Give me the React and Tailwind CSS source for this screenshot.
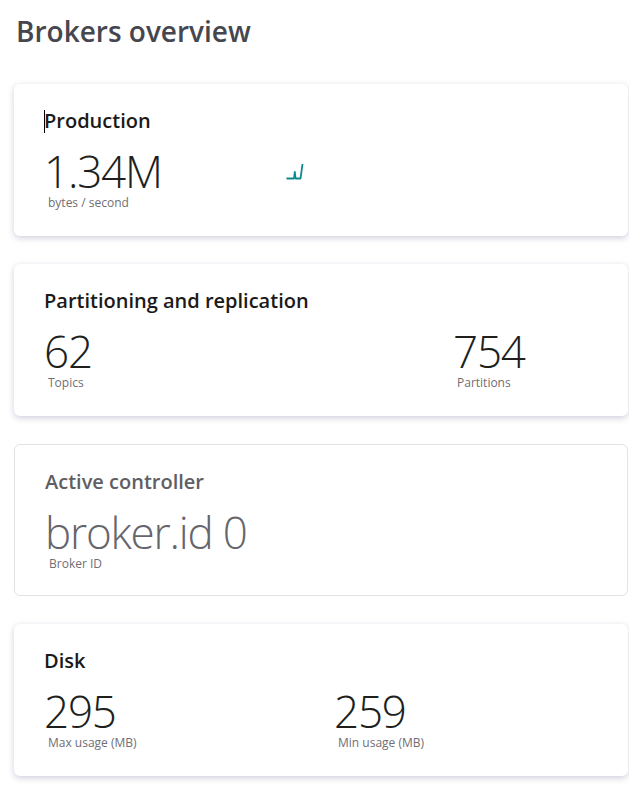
const FONT = "font-['Segoe_UI','Open_Sans','Liberation_Sans',sans-serif]";

function Stat({ value, label, muted }) {
  return (
    <div className="flex flex-col">
      <span
        className={`text-[44px] leading-[47px] font-light tracking-[-1.2px] ${
          muted ? 'text-[#66656b]' : 'text-[#201f1e]'
        }`}
      >
        {value}
      </span>
      <span className="pl-1 text-[12px] leading-4 text-[#6f6e73]">{label}</span>
    </div>
  );
}

function Sparkline() {
  return (
    <svg width="20" height="18" viewBox="0 0 20 18" className="mt-[15px]">
      <polyline
        points="0.5,15.5 8,15.5 8.8,9 9.6,15.5 14.5,15.5 16.5,1"
        fill="none"
        stroke="#0a8a8c"
        strokeWidth="1.8"
        strokeLinejoin="round"
      />
    </svg>
  );
}

function Card({ title, muted, children, caret }) {
  return (
    <div
      className={`h-[152px] rounded-md bg-white pl-[30px] pt-[23px] ${
        muted
          ? 'border border-[#e3e3e6]'
          : 'shadow-[0_2px_6px_rgba(60,64,120,0.26)]'
      }`}
    >
      <h2
        className={`flex items-center text-[20px] leading-7 font-semibold ${
          muted ? 'text-[#5f5e64]' : 'text-[#1b1a19]'
        }`}
      >
        {caret && <span className="-mr-px inline-block h-[23px] w-px bg-black" />}
        {title}
      </h2>
      <div className="mt-[13px] flex items-start">{children}</div>
    </div>
  );
}

export default function App() {
  return (
    <div className={`min-h-screen bg-white ${FONT}`}>
      <h1 className="pl-4 pt-[11px] text-[28px] leading-10 font-semibold text-[#46464f]">
        Brokers overview
      </h1>
      <div className="mt-[33px] ml-[14px] mr-px flex flex-col gap-7">
        <Card title="Production" caret>
          <div className="w-[242px]">
            <Stat value="1.34M" label="bytes / second" />
          </div>
          <Sparkline />
        </Card>
        <Card title="Partitioning and replication">
          <div className="w-[409px]">
            <Stat value="62" label="Topics" />
          </div>
          <Stat value="754" label="Partitions" />
        </Card>
        <Card title="Active controller" muted>
          <Stat value="broker.id 0" label="Broker ID" muted />
        </Card>
        <Card title="Disk">
          <div className="w-[290px]">
            <Stat value="295" label="Max usage (MB)" />
          </div>
          <Stat value="259" label="Min usage (MB)" />
        </Card>
      </div>
    </div>
  );
}
